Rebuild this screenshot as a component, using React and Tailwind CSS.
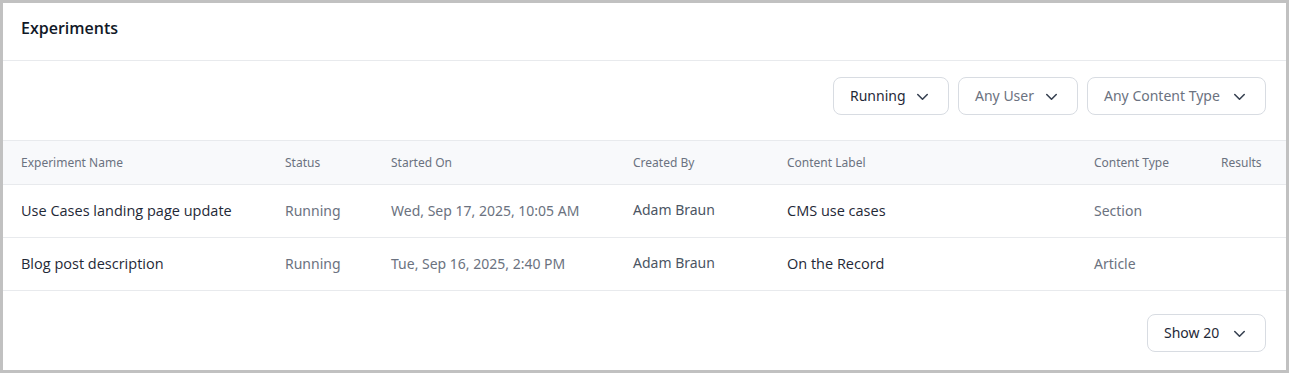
import React from 'react';

const rows = [
  {
    name: 'Use Cases landing page update',
    status: 'Running',
    started: 'Wed, Sep 17, 2025, 10:05 AM',
    by: 'Adam Braun',
    label: 'CMS use cases',
    type: 'Section',
  },
  {
    name: 'Blog post description',
    status: 'Running',
    started: 'Tue, Sep 16, 2025, 2:40 PM',
    by: 'Adam Braun',
    label: 'On the Record',
    type: 'Article',
  },
];

const Chevron = () => (
  <svg width="19" height="19" viewBox="0 0 24 24" fill="none" stroke="currentColor" strokeWidth="2" strokeLinecap="round" strokeLinejoin="round">
    <path d="M6 9.5l6 6 6-6" />
  </svg>
);

const Select = ({ children, dim, className = '' }) => (
  <button
    className={`h-[38px] flex items-center justify-between whitespace-nowrap pl-4 pr-[16px] border border-[#d8dce2] rounded-lg bg-white text-sm ${dim ? 'text-[#6b7280]' : 'text-[#1f2937]'} ${className}`}
  >
    <span>{children}</span>
    <span className="shrink-0 text-[#374151]"><Chevron /></span>
  </button>
);

const medium = 'font-["Open_Sans",sans-serif] font-medium text-[14.5px]';

export default function App() {
  return (
    <div className="w-[1289px] h-[373px] border-[3px] border-[#c1c1c1] bg-white" style={{ fontFamily: '"Noto Sans", sans-serif' }}>
      <div className="h-[58px] pt-[13px] pl-[18px] border-b border-[#e8eaed]">
        <h2 className={`text-base leading-6 text-[#111827] font-["Open_Sans",sans-serif] font-semibold`}>Experiments</h2>
      </div>

      <div className="flex justify-end gap-[9px] pr-[20px] pt-[16px] pb-[25px]">
        <Select className="w-[116px]">Running</Select>
        <Select dim className="w-[120px]">Any User</Select>
        <Select dim className="w-[179px]">Any Content Type</Select>
      </div>

      <div className="grid grid-cols-[282px_106px_242px_154px_307px_127px_1fr] border-t border-[#e8eaed]">
        <div className="contents text-xs text-[#6b7280]">
          {['Experiment Name', 'Status', 'Started On', 'Created By', 'Content Label', 'Content Type', 'Results'].map((h, i) => (
            <div key={h} className={`h-[44px] flex items-center bg-[#f8f9fb] border-b border-[#e8eaed] ${i === 0 ? 'pl-[18px]' : ''}`}>
              {h}
            </div>
          ))}
        </div>
        {rows.map((r) => (
          <div key={r.name} className="contents text-sm">
            <div className={`h-[53px] flex items-center pl-[18px] border-b border-[#e8eaed] text-[#1f2937] ${medium}`}>{r.name}</div>
            <div className="h-[53px] flex items-center border-b border-[#e8eaed] text-[#6b7280]">{r.status}</div>
            <div className="h-[53px] flex items-center border-b border-[#e8eaed] text-[#6b7280]">{r.started}</div>
            <div className="h-[53px] flex items-center pb-[3px] border-b border-[#e8eaed] text-[#4b5563]">{r.by}</div>
            <div className={`h-[53px] flex items-center border-b border-[#e8eaed] text-[#1f2937] ${medium}`}>{r.label}</div>
            <div className="h-[53px] flex items-center border-b border-[#e8eaed] text-[#6b7280]">{r.type}</div>
            <div className="h-[53px] border-b border-[#e8eaed]" />
          </div>
        ))}
      </div>

      <div className="flex justify-end pr-[20px] pt-[23px]">
        <Select className="w-[119px]">Show 20</Select>
      </div>
    </div>
  );
}
